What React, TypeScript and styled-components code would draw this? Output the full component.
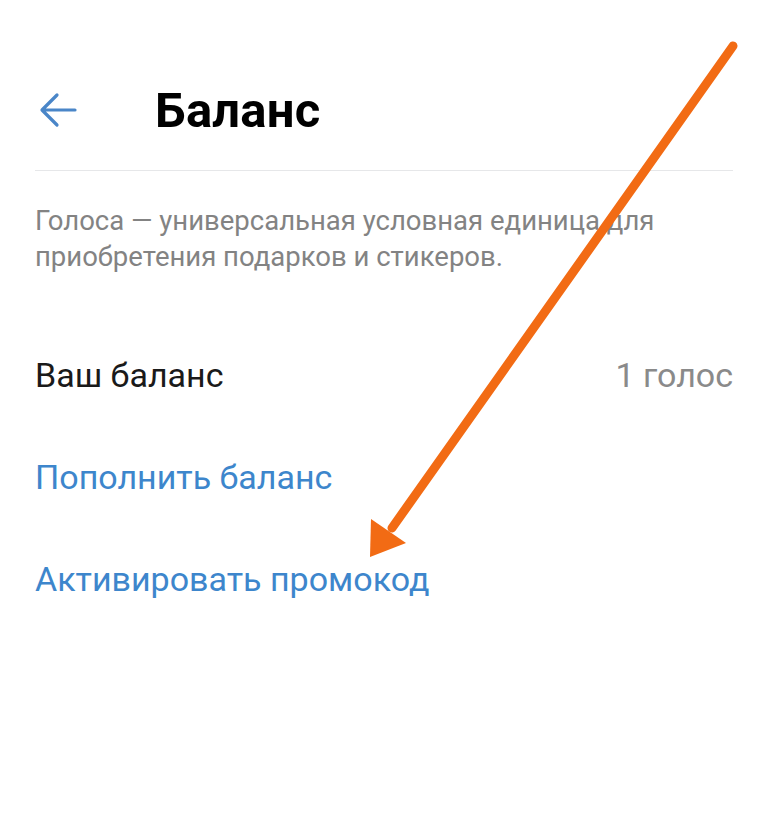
import styled, { createGlobalStyle } from "styled-components";

const GlobalStyle = createGlobalStyle`
  html, body {
    margin: 0;
    padding: 0;
    background: #ffffff;
  }
  body {
    font-family: Roboto, "Noto Sans", "Liberation Sans", sans-serif;
  }
`;

export default function App() {
  return (
    <>
      <GlobalStyle />
      <StyledPage>
        <StyledHeader>
          <StyledBackButton aria-label="Назад">
            <svg width="38" height="36" viewBox="0 0 38 36" fill="none">
              <path
                d="M36 18H4M18 3L3 18l15 15"
                stroke="#4a86c8"
                strokeWidth="3.2"
                strokeLinecap="round"
                strokeLinejoin="round"
              />
            </svg>
          </StyledBackButton>
          <StyledTitle>Баланс</StyledTitle>
        </StyledHeader>
        <StyledDivider />
        <StyledDescription>
          Голоса — универсальная условная единица для приобретения подарков и
          стикеров.
        </StyledDescription>
        <StyledList>
          <StyledRow>
            <StyledLabel>Ваш баланс</StyledLabel>
            <StyledValue>1 голос</StyledValue>
          </StyledRow>
          <StyledRow>
            <StyledLink>Пополнить баланс</StyledLink>
          </StyledRow>
          <StyledRow>
            <StyledLink>Активировать промокод</StyledLink>
          </StyledRow>
        </StyledList>

        {/* orange pointer drawn over the screenshot */}
        <StyledPointer width="768" height="840" viewBox="0 0 768 840">
          <line
            x1="733"
            y1="46"
            x2="392"
            y2="528"
            stroke="#f26b14"
            strokeWidth="9"
            strokeLinecap="round"
          />
          <polygon points="370,557 371,519 406,543" fill="#f26b14" />
        </StyledPointer>
      </StyledPage>
    </>
  );
}

const StyledPage = styled.div`
  position: relative;
  width: 768px;
  height: 840px;
  box-sizing: border-box;
  padding: 0 35px;
  background: #ffffff;
  overflow: hidden;
`;

const StyledHeader = styled.div`
  display: flex;
  align-items: center;
  height: 70px;
  padding-top: 75px;
  margin-bottom: 25px;
`;

const StyledBackButton = styled.div`
  display: flex;
  align-items: center;
  margin-left: 4px;
  width: 38px;
  height: 36px;
`;

const StyledTitle = styled.h1`
  margin: 0 0 0 78px;
  font-size: 49px;
  font-weight: 700;
  color: #000000;
  letter-spacing: 0.2px;
`;

const StyledDivider = styled.div`
  height: 1px;
  background: #e6e7e9;
`;

const StyledDescription = styled.p`
  margin: 32px 0 0;
  font-size: 27.5px;
  line-height: 36px;
  color: #838383;
  max-width: 665px;
`;

const StyledList = styled.div`
  display: flex;
  flex-direction: column;
  margin-top: 49px;
`;

const StyledRow = styled.div`
  display: flex;
  align-items: center;
  justify-content: space-between;
  height: 102px;
`;

const StyledLabel = styled.span`
  font-size: 34px;
  color: #1a1a1a;
`;

const StyledValue = styled.span`
  font-size: 34px;
  color: #8a8a8a;
`;

const StyledLink = styled.span`
  font-size: 34px;
  color: #3d86cc;
  cursor: pointer;
`;

const StyledPointer = styled.svg`
  position: absolute;
  left: 0;
  top: 0;
  pointer-events: none;
`;
